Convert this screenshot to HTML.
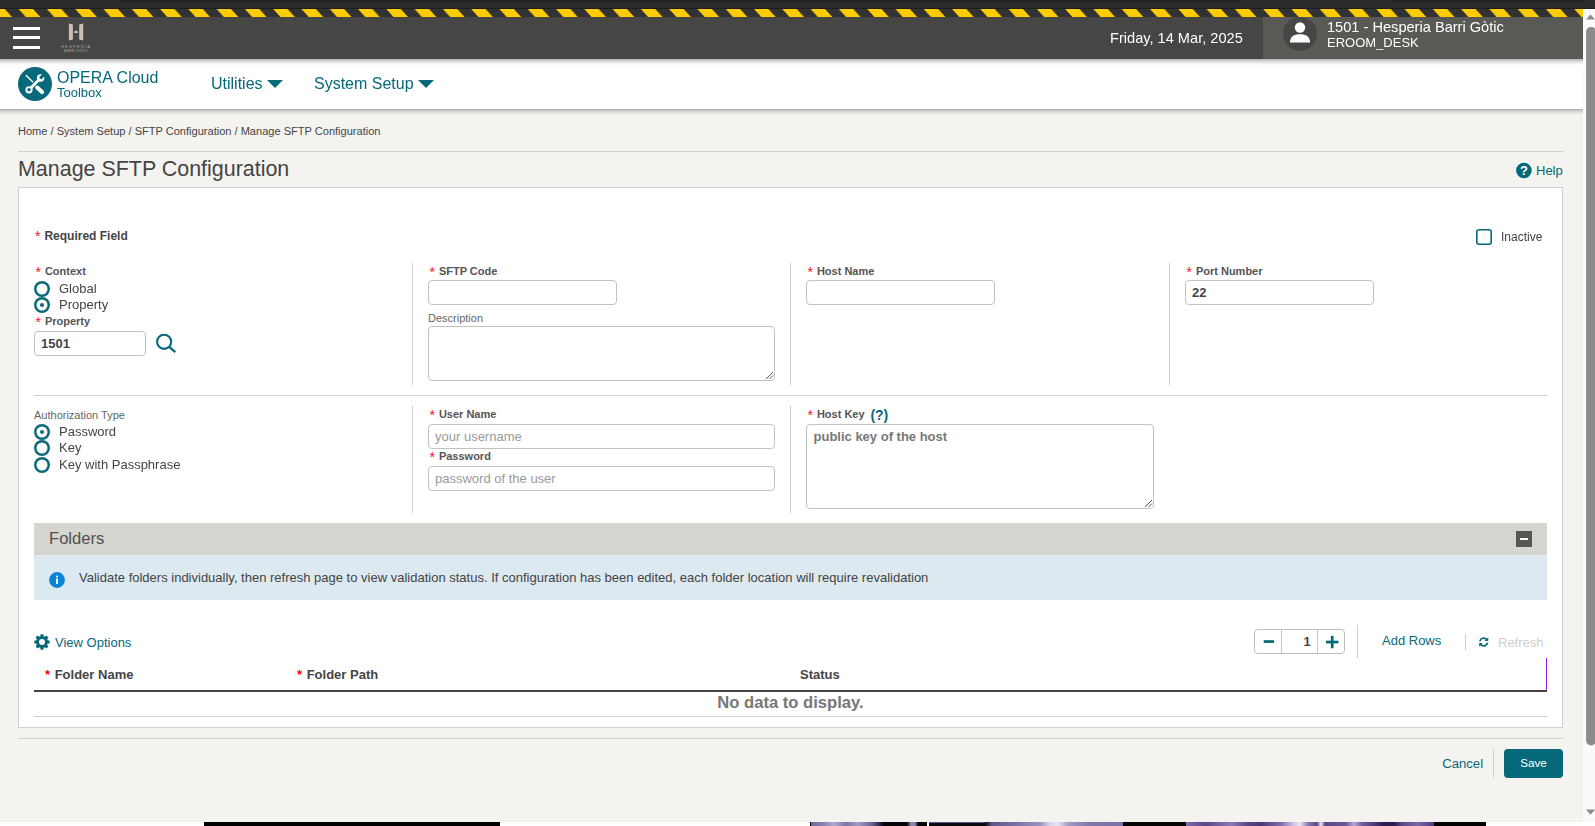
<!DOCTYPE html>
<html lang="en">
<head>
<meta charset="utf-8">
<title>Manage SFTP Configuration</title>
<style>
*{box-sizing:border-box;margin:0;padding:0}
html,body{width:1595px;height:826px;overflow:hidden;background:#f4f3ef;font-family:"Liberation Sans",sans-serif;color:#444}
body{position:relative}
#root{position:absolute;left:0;top:0;width:1595px;height:826px}
.g,.rl{will-change:transform}
.abs{position:absolute}
.t{position:absolute;white-space:nowrap;line-height:1}
.teal{color:#066979}
.req{color:#f00;font-weight:bold;margin-right:1px}
.lbl .rq{top:-1px;left:-8.8px}
.rq{position:absolute;left:-9.3px;top:-1px;font-style:normal;font-weight:normal;font-size:14px;line-height:1;color:#f5102d}
/* top chrome */
#chrome{left:0;top:0;width:1595px;height:9px;background:linear-gradient(#2b2b2b 0,#2b2b2b 7.5px,#1d1d1d 8.5px)}
#stripe{left:0;top:9px;width:1583px;height:8px}
#hdr{left:0;top:17px;width:1583px;height:42px;background:#464644}
#hdrR{left:1263px;top:17px;width:320px;height:42px;background:#595a55}
#nav{left:0;top:59px;width:1583px;height:50px;background:#fff}
#navshadow{left:0;top:109px;width:1583px;height:6px;background:linear-gradient(rgba(0,0,0,.30),rgba(0,0,0,.12) 40%,rgba(0,0,0,0))}
#hdrshadow{left:0;top:59px;width:1583px;height:6px;background:linear-gradient(rgba(0,0,0,.30),rgba(0,0,0,.12) 45%,rgba(0,0,0,0))}
.ham{left:13px;width:27px;height:3px;background:#fff}
.hr{position:absolute;height:1px;background:#cfcfcf}
.vr{position:absolute;width:1px;background:#cfcfcf}
#panel{left:18px;top:187px;width:1545px;height:541px;background:#fff;border:1px solid #cfcfcf}
.lbl{font-size:11px;font-weight:bold;color:#555;padding-left:.5px}
.lbl2{font-size:11px;color:#666}
.inp{position:absolute;background:#fff;border:1px solid #c2c2c2;border-radius:4px;font-size:13px;font-weight:bold;color:#444;line-height:23px;padding:0 0 0 6px;white-space:nowrap}
.ph{font-weight:normal;color:#9a9a9a;font-size:13px}
.radio{position:absolute;width:16px;height:16px;box-shadow:inset 0 0 0 2.5px #0a6a7a;border-radius:50%;background:#fff}
.radio.on::after{content:"";position:absolute;left:50%;top:50%;width:4.8px;height:4.8px;margin:-2.4px 0 0 -2.4px;border-radius:50%;background:#0a6a7a}
.rl{font-size:13px;color:#444}
</style>
</head>
<body>
<div id="root">
<!-- browser chrome / warning stripe / header -->
<div class="abs" id="chrome"></div>
<div class="abs" style="left:118px;top:-12px;width:1124px;height:14px;border-radius:10px;background:#222"></div>
<div class="abs" style="left:1388px;top:-12px;width:200px;height:14px;border-radius:10px;background:#222"></div>
<svg class="abs" id="stripe" width="1583" height="8"><defs><pattern id="hz" width="28.284" height="8" patternUnits="userSpaceOnUse"><rect width="28.284" height="8" fill="#323232"/><path d="M18.65 0H33.05L40.3 8H25.9ZM-9.634 0H4.766L12.016 8H-2.384Z" fill="#ffcc00"/></pattern></defs><rect width="1583" height="8" fill="url(#hz)"/></svg>
<div class="abs" id="hdr"></div>
<div class="abs" id="hdrR"></div>
<div class="abs" id="nav"></div>
<div class="abs" id="hdrshadow"></div>
<div class="abs" id="navshadow"></div>

<div class="abs ham" style="top:27px"></div>
<div class="abs ham" style="top:36px"></div>
<div class="abs ham" style="top:46px"></div>

<!-- hesperia logo -->
<svg class="abs" style="left:58px;top:22px" width="36" height="32" viewBox="0 0 36 32">
  <path d="M10.9 1.6L14.9 2.6V17.6L10.9 18.6Z" fill="#cdc1b5"/>
  <path d="M25.2 1.6L21.2 2.6V17.6L25.2 18.6Z" fill="#cdc1b5"/>
  <path d="M15.9 11Q15.9 8.5 18 8.5Q20.1 8.5 20.1 11Z" fill="#cdc1b5"/>
  <text x="18" y="26" font-family="Liberation Sans, sans-serif" font-size="4.3" letter-spacing="1.05" fill="#a8a199" text-anchor="middle">HESPERIA</text>
  <text x="18" y="30.2" font-family="Liberation Sans, sans-serif" font-size="3" letter-spacing="0.38" fill="#9a938b" text-anchor="middle" font-weight="bold">BARRI GÒTIC</text>
</svg>

<div class="g t" style="left:1110px;top:30.9px;font-size:14.6px;color:#fff">Friday, 14 Mar, 2025</div>
<svg class="abs" style="left:1283px;top:17px" width="34" height="34" viewBox="0 0 34 34">
  <circle cx="17" cy="17" r="17" fill="#464644"/>
  <circle cx="17" cy="10.5" r="5.2" fill="#fff"/>
  <path d="M7 25.5 C7 19.5 11 17.3 17 17.3 C23 17.3 27 19.5 27 25.5 Z" fill="#fff"/>
</svg>
<div class="g t" style="left:1327px;top:19.5px;font-size:14.6px;color:#fff">1501 - Hesperia Barri Gòtic</div>
<div class="g t" style="left:1327px;top:36px;font-size:13px;color:#fff">EROOM_DESK</div>

<!-- nav bar -->
<svg class="abs" style="left:18px;top:67px" width="34" height="34" viewBox="0 0 34 34">
  <circle cx="17" cy="17" r="17" fill="#066979"/>
  <path d="M8.3 8.5L14.6 14.7" stroke="#fff" stroke-width="1.5" stroke-linecap="round" fill="none"/>
  <path d="M19.2 20.6L24 25" stroke="#fff" stroke-width="4.1" stroke-linecap="round" fill="none"/>
  <path d="M11.6 22.2L21.6 12" stroke="#fff" stroke-width="2.8" stroke-linecap="butt" fill="none"/>
  <circle cx="11" cy="22.8" r="3.6" fill="#fff"/>
  <circle cx="11" cy="22.8" r="1.7" fill="#066979"/>
  <circle cx="22.6" cy="11" r="3.7" fill="#fff"/>
  <path d="M22.2 11.4L27.5 6.1" stroke="#066979" stroke-width="3" fill="none"/>
</svg>
<div class="g t teal" style="left:57px;top:70px;font-size:16px">OPERA Cloud</div>
<div class="g t teal" style="left:57px;top:86px;font-size:13px">Toolbox</div>
<div class="g t teal" style="left:211px;top:76px;font-size:16px">Utilities</div>
<svg class="abs" style="left:267px;top:80px" width="16" height="8"><path d="M0 0H16L8 8Z" fill="#066979"/></svg>
<div class="g t teal" style="left:313.5px;top:76px;font-size:16px">System Setup</div>
<svg class="abs" style="left:418px;top:80px" width="16" height="8"><path d="M0 0H16L8 8Z" fill="#066979"/></svg>

<!-- breadcrumb / title -->
<div class="t" style="left:18px;top:126px;font-size:11.05px;color:#444">Home / System Setup / SFTP Configuration / Manage SFTP Configuration</div>
<div class="hr" style="left:18px;top:151px;width:1545px"></div>
<div class="t" style="left:18px;top:159.2px;font-size:21.45px;color:#444">Manage SFTP Configuration</div>
<svg class="abs" style="left:1516px;top:162px" width="16" height="17" viewBox="0 0 16 17"><circle cx="7.9" cy="8.5" r="7.8" fill="#066979"/><text x="7.9" y="13.4" text-anchor="middle" font-family="Liberation Sans, sans-serif" font-weight="bold" font-size="13" fill="#fff">?</text></svg>
<div class="t teal" style="left:1536px;top:164px;font-size:13px">Help</div>

<div class="abs" id="panel"></div>

<!-- row 1 -->
<div class="t" style="left:44.4px;top:230px;font-size:12px;font-weight:bold;color:#444"><i class="rq">*</i>Required Field</div>
<div class="abs" style="left:1476px;top:229px;width:16px;height:16px;box-shadow:inset 0 0 0 1.6px #066979;border-radius:3px;background:#fff"></div>
<div class="g t" style="left:1501px;top:231px;font-size:12px;color:#444">Inactive</div>

<div class="vr" style="left:412px;top:263px;height:122px"></div>
<div class="vr" style="left:790px;top:263px;height:122px"></div>
<div class="vr" style="left:1169px;top:263px;height:122px"></div>

<div class="t lbl" style="left:44.4px;top:266px"><i class="rq">*</i>Context</div>
<div class="radio" style="left:34px;top:281px"></div>
<div class="t rl" style="left:59px;top:282px">Global</div>
<div class="radio on" style="left:34px;top:297px"></div>
<div class="t rl" style="left:59px;top:298px">Property</div>
<div class="t lbl" style="left:44.4px;top:316px"><i class="rq">*</i>Property</div>
<div class="inp" style="left:34px;top:331px;width:112px;height:25px">1501</div>
<svg class="abs" style="left:154px;top:331px" width="24" height="24" viewBox="0 0 24 24"><circle cx="10.14" cy="10.8" r="7.05" fill="none" stroke="#066979" stroke-width="2.05"/><path d="M14.94 15.6L21.3 21.15" stroke="#066979" stroke-width="2.3"/></svg>

<div class="t lbl" style="left:438.4px;top:266px"><i class="rq">*</i>SFTP Code</div>
<div class="inp" style="left:428px;top:280px;width:189px;height:25px"></div>
<div class="t lbl2" style="left:428px;top:313px">Description</div>
<div class="inp" style="left:428px;top:326px;width:347px;height:55px"></div>
<svg class="abs" style="left:765px;top:371px" width="9" height="9"><path d="M1 8L8 1M4.5 8L8 4.5" stroke="#555" stroke-width="1"/></svg>

<div class="t lbl" style="left:816.4px;top:266px"><i class="rq">*</i>Host Name</div>
<div class="inp" style="left:806px;top:280px;width:189px;height:25px"></div>

<div class="t lbl" style="left:1195.4px;top:266px"><i class="rq">*</i>Port Number</div>
<div class="inp" style="left:1185px;top:280px;width:189px;height:25px">22</div>

<div class="hr" style="left:34px;top:395px;width:1513px"></div>
<!-- SECTION-ROW1 -->
<!-- row 2 -->
<div class="vr" style="left:412px;top:406px;height:107px"></div>
<div class="vr" style="left:790px;top:406px;height:107px"></div>

<div class="t lbl2" style="left:34px;top:410px">Authorization Type</div>
<div class="radio on" style="left:34px;top:424px"></div>
<div class="t rl" style="left:59px;top:425px">Password</div>
<div class="radio" style="left:34px;top:440px"></div>
<div class="t rl" style="left:59px;top:441px">Key</div>
<div class="radio" style="left:34px;top:457px"></div>
<div class="t rl" style="left:59px;top:458px">Key with Passphrase</div>

<div class="t lbl" style="left:438.4px;top:409px"><i class="rq">*</i>User Name</div>
<div class="inp" style="left:428px;top:424px;width:347px;height:25px"><span class="ph">your username</span></div>
<div class="t lbl" style="left:438.4px;top:451px"><i class="rq">*</i>Password</div>
<div class="inp" style="left:428px;top:466px;width:347px;height:25px"><span class="ph">password of the user</span></div>

<div class="t lbl" style="left:816.4px;top:409px"><i class="rq">*</i>Host Key</div>
<div class="t teal" style="left:870.4px;top:408.4px;font-size:14px;font-weight:bold">(?)</div>
<div class="inp" style="left:806px;top:424px;width:348px;height:85px;color:#777;padding:0 0 0 6.5px">public key of the host</div>
<svg class="abs" style="left:1144px;top:499px" width="9" height="9"><path d="M1 8L8 1M4.5 8L8 4.5" stroke="#555" stroke-width="1"/></svg>
<!-- SECTION-ROW2 -->
<!-- folders -->
<div class="abs" style="left:34px;top:523px;width:1513px;height:32px;background:#d6d5d0"></div>
<div class="t" style="left:49px;top:530.6px;font-size:16.6px;color:#505050">Folders</div>
<div class="abs" style="left:1516px;top:531px;width:16px;height:16px;background:#575755"></div>
<div class="abs" style="left:1520px;top:538px;width:8px;height:2px;background:#fff"></div>

<div class="abs" style="left:34px;top:555px;width:1513px;height:45px;background:#dce9f0"></div>
<svg class="abs" style="left:49px;top:572px" width="16" height="16" viewBox="0 0 16 16"><circle cx="8" cy="8" r="7.9" fill="#0a84d6"/><circle cx="8" cy="4.5" r="1.05" fill="#fff"/><rect x="7.1" y="6.5" width="1.8" height="5.5" fill="#fff"/></svg>
<div class="t" style="left:79px;top:571px;font-size:13px;color:#444">Validate folders individually, then refresh page to view validation status. If configuration has been edited, each folder location will require revalidation</div>

<svg class="abs" style="left:34px;top:634px" width="16" height="16" viewBox="0 0 16 16">
  <g fill="#066979">
    <circle cx="8" cy="8" r="6"/>
    <g id="tth"><rect x="6.4" y="0.3" width="3.2" height="15.4" rx="0.6"/></g>
    <rect x="6.4" y="0.3" width="3.2" height="15.4" rx="0.6" transform="rotate(45 8 8)"/>
    <rect x="6.4" y="0.3" width="3.2" height="15.4" rx="0.6" transform="rotate(90 8 8)"/>
    <rect x="6.4" y="0.3" width="3.2" height="15.4" rx="0.6" transform="rotate(135 8 8)"/>
  </g>
  <circle cx="8" cy="8" r="3" fill="#fff"/>
</svg>
<div class="t teal" style="left:55px;top:636px;font-size:13px">View Options</div>

<div class="abs" style="left:1254px;top:629px;width:91px;height:25px;border:1px solid #bdbdbd;border-radius:4px;background:#fff"></div>
<div class="vr" style="left:1281px;top:630px;height:23px;background:#c8c8c8"></div>
<div class="vr" style="left:1317px;top:630px;height:23px;background:#c8c8c8"></div>
<div class="t" style="left:1303.6px;top:634.5px;font-size:13px;font-weight:bold;color:#444">1</div>
<svg class="abs" style="left:1254px;top:629px" width="91" height="25" viewBox="0 0 91 25"><g fill="#066979"><rect x="9.7" y="11.2" width="10.4" height="2.7"/><rect x="72" y="11.7" width="12.4" height="2.7"/><rect x="76.85" y="6.85" width="2.7" height="12.4"/></g></svg>
<div class="vr" style="left:1357px;top:625px;height:33px"></div>
<div class="t teal" style="left:1382px;top:634px;font-size:13px">Add Rows</div>
<div class="vr" style="left:1465px;top:634px;height:16px"></div>
<svg class="abs" style="left:1477px;top:636px" width="14" height="12" viewBox="0 0 14 12">
  <g transform="translate(6.7 6.05) scale(.87) translate(-6 -6)"><g fill="none" stroke="#066979" stroke-width="2"><path d="M1.6 5.2A4.4 4.4 0 0 1 9.4 3.2"/><path d="M10.4 6.8A4.4 4.4 0 0 1 2.6 8.8"/></g>
  <path d="M11.2 0.6V4.8H7Z" fill="#066979"/><path d="M0.8 11.4V7.2H5Z" fill="#066979"/></g>
</svg>
<div class="t" style="left:1498px;top:636px;font-size:13px;color:#cdcdcd">Refresh</div>

<div class="t" style="left:45px;top:668px;font-size:13px;font-weight:bold;color:#444"><span class="req">*</span>&nbsp;Folder Name</div>
<div class="t" style="left:297px;top:668px;font-size:13px;font-weight:bold;color:#444"><span class="req">*</span>&nbsp;Folder Path</div>
<div class="t" style="left:800px;top:668px;font-size:13px;font-weight:bold;color:#444">Status</div>
<div class="abs" style="left:1546px;top:658px;width:1px;height:33px;background:#a020f0"></div>
<div class="abs" style="left:34px;top:690px;width:1513px;height:2px;background:#444"></div>
<div class="t" style="left:34px;top:695.4px;width:1513px;text-align:center;font-size:16.6px;font-weight:bold;color:#777">No data to display.</div>
<div class="hr" style="left:34px;top:716px;width:1513px"></div>
<!-- SECTION-FOLDERS -->
<!-- footer -->
<div class="hr" style="left:18px;top:738px;width:1545px"></div>
<div class="t teal" style="left:1442.3px;top:757px;font-size:13.1px">Cancel</div>
<div class="vr" style="left:1493px;top:749px;height:29px"></div>
<div class="abs" style="left:1504px;top:749px;width:59px;height:29px;background:#066979;border-radius:4px"></div>
<div class="t" style="left:1504px;top:757.3px;width:59px;text-align:center;font-size:11.7px;color:#fff">Save</div>

<!-- scrollbar -->
<div class="abs" style="left:1583px;top:9px;width:12px;height:813px;background:#fafafa"></div>
<svg class="abs" style="left:1583px;top:9px" width="12" height="813" viewBox="0 0 12 813">
  <path d="M3 10.5L7.5 5.5L12 10.5Z" fill="#8b8b8b"/>
  <rect x="3.1" y="17.9" width="10" height="718.6" rx="5" fill="#8b8b8b"/>
  <path d="M3 800.6L7.6 805.8L12.2 800.6Z" fill="#8b8b8b"/>
</svg>

<!-- bottom strip (window behind) -->
<div class="abs" style="left:0;top:822px;width:1595px;height:4px;background:#fff"></div>
<div class="abs" style="left:204px;top:822px;width:296px;height:4px;background:#000"></div>
<div class="abs" style="left:810px;top:822px;width:118px;height:4px;background:linear-gradient(90deg,#000 0,#000 1px,#6f669c 1px,#8a82b4 14px,#b1abd0 24px,#7c73a6 36px,#a39cc6 48px,#6a618f 62px,#2a2440 70px,#050507 74px,#050507 97px,#8d86b5 101px,#8d86b5 105px,#050507 108px,#000 117px,#fff 117px)"></div>
<div class="abs" style="left:928px;top:822px;width:195px;height:4px;background:linear-gradient(90deg,#fff 0,#fff 1px,#0a0910 1px,#0a0910 57px,#5f5788 64px,#7d75a9 90px,#9a93c0 112px,#d9d5ea 122px,#e6e3f1 130px,#a59ec8 140px,#8078ab 160px,#7a71a6 195px)"></div>
<div class="abs" style="left:929px;top:822px;width:56px;height:1px;background:#5d5586"></div>
<div class="abs" style="left:1123px;top:822px;width:63px;height:4px;background:#050506"></div>
<div class="abs" style="left:1186px;top:822px;width:248px;height:4px;background:linear-gradient(90deg,#7e6aae 0,#5b4589 20px,#8b79b8 45px,#5a4488 62px,#4a3678 75px,#7f6cae 95px,#cfc6e4 108px,#e9e4f3 114px,#8a78b7 122px,#5c468a 131px,#efeaf6 135px,#5c468a 139px,#6d589b 160px,#b5a9d4 168px,#715c9f 176px,#4a3577 190px,#2b1b4f 198px,#2b1b4f 208px,#5d478b 216px,#7a66a9 232px,#4d387a 248px)"></div>
<div class="abs" style="left:1434px;top:822px;width:52px;height:4px;background:#000"></div>
<!-- SECTION-FOOTER -->
</div>
</body>
</html>
